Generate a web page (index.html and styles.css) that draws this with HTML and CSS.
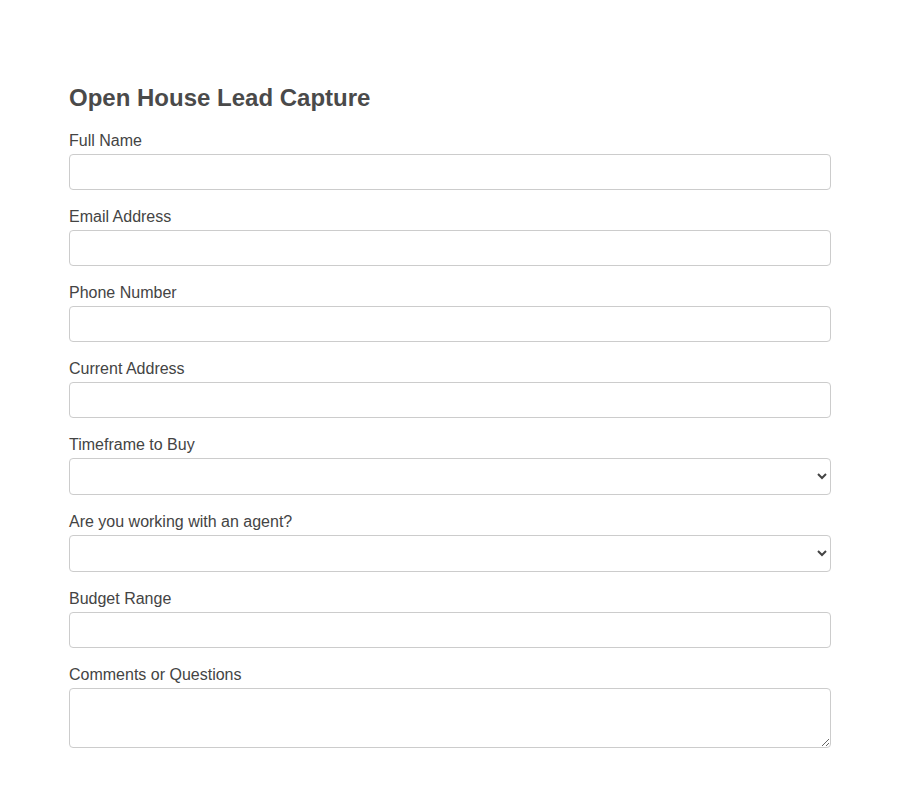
FILE: index.html
```html
<!DOCTYPE html>
<html lang="en">
<head>
<meta charset="utf-8">
<title>Open House Lead Capture</title>
<link rel="stylesheet" href="styles.css">
</head>
<body>
<main class="container">
  <h2 class="title">Open House Lead Capture</h2>
  <form class="form">
    <div class="field">
      <label class="label" for="name">Full Name</label>
      <input class="control" id="name" type="text">
    </div>
    <div class="field">
      <label class="label" for="email">Email Address</label>
      <input class="control" id="email" type="email">
    </div>
    <div class="field">
      <label class="label" for="phone">Phone Number</label>
      <input class="control" id="phone" type="tel">
    </div>
    <div class="field">
      <label class="label" for="addr">Current Address</label>
      <input class="control" id="addr" type="text">
    </div>
    <div class="field">
      <label class="label" for="time">Timeframe to Buy</label>
      <select class="control select" id="time"><option></option></select>
    </div>
    <div class="field">
      <label class="label" for="agent">Are you working with an agent?</label>
      <select class="control select" id="agent"><option></option></select>
    </div>
    <div class="field">
      <label class="label" for="budget">Budget Range</label>
      <input class="control" id="budget" type="text">
    </div>
    <div class="field">
      <label class="label" for="comments">Comments or Questions</label>
      <textarea class="control textarea" id="comments"></textarea>
    </div>
  </form>
</main>
</body>
</html>
```
FILE: styles.css
```css
html, body {
  margin: 0;
  padding: 0;
  background: #ffffff;
}
body {
  font-family: "Liberation Sans", Arial, sans-serif;
  color: #444444;
}
.container {
  width: 762px;
  margin: 0 auto;
  padding-top: 84px;
}
.title {
  margin: 0 0 19px 0;
  font-size: 24px;
  font-weight: bold;
  line-height: 28px;
  color: #4a4a4a;
}
.form {
  display: flex;
  flex-direction: column;
}
.field {
  display: flex;
  flex-direction: column;
  margin-bottom: 17px;
}
.label {
  display: block;
  font-size: 16px;
  line-height: 18px;
  padding-top: 1px;
  margin-bottom: 4px;
  color: #444444;
}
.control {
  box-sizing: border-box;
  width: 100%;
  height: 36px;
  margin: 0;
  padding: 8px 10px;
  font-family: "Liberation Sans", Arial, sans-serif;
  font-size: 16px;
  color: #444444;
  background: #ffffff;
  border: 1px solid #cccccc;
  border-radius: 4px;
}
.select {
  height: 37px;
  padding: 6px 6px;
}
.textarea {
  height: 60px;
  resize: vertical;
}
```
